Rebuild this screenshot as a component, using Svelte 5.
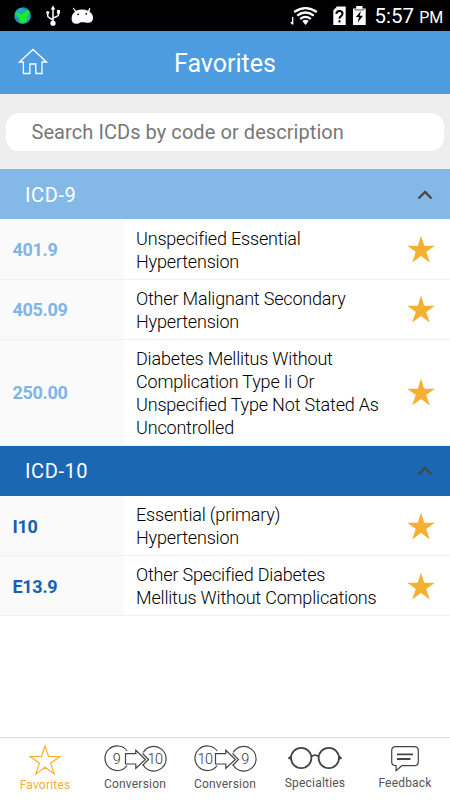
<script>
    let sections = [
        {
            name: "ICD-9",
            kind: "nine",
            rows: [
                { code: "401.9", lines: ["Unspecified Essential", "Hypertension"] },
                { code: "405.09", lines: ["Other Malignant Secondary", "Hypertension"] },
                { code: "250.00", lines: ["Diabetes Mellitus Without", "Complication Type Ii Or", "Unspecified Type Not Stated As", "Uncontrolled"] }
            ]
        },
        {
            name: "ICD-10",
            kind: "ten",
            rows: [
                { code: "I10", lines: ["Essential (primary)", "Hypertension"] },
                { code: "E13.9", lines: ["Other Specified Diabetes", "Mellitus Without Complications"] }
            ]
        }
    ];

    let tabs = [
        { label: "Favorites", icon: "star" },
        { label: "Conversion", icon: "convert", from: "9", to: "10" },
        { label: "Conversion", icon: "convert", from: "10", to: "9" },
        { label: "Specialties", icon: "glasses" },
        { label: "Feedback", icon: "bubble" }
    ];
    let active = "Favorites";
    let search = "";
    let closed = {};
</script>

<div class="screen">
    <div class="status">
        <svg class="notes" width="100" height="31" viewBox="0 0 100 31">
            <circle cx="22.6" cy="15.7" r="8.3" fill="#20a9b8" />
            <path d="M17 12l4 3 7-5 2 2-3 5-1 4-4 2-3-2 1-3-4-4z" fill="#1cf01c" />
            <path d="M15.5 18l4 4M23 8l4 1" stroke="#1687b5" stroke-width="1.5" />
            <g fill="none" stroke="#fff" stroke-width="1.5">
                <path d="M53 24V8M47.7 12.5v3.2q0 1.8 5.3 4M58.5 11.5v3q0 1.8-5.5 3.5" />
            </g>
            <g fill="#fff">
                <path d="M50.7 9.5L53 5.6l2.3 3.9z" />
                <circle cx="53" cy="23.2" r="2.6" />
                <circle cx="47.7" cy="12.5" r="1.6" />
                <path d="M57 10h3v3.5h-3z" />
                <path d="M73.500 7.700l2.500 3q6-2.600 12 0l1.500-3 .8.4-.7 4q3.400 2 3.400 5.800 0 4.800-4.800 4.800-2.200 0-4.200-.5-2.500.3-3.500 0-1.500 1.500-4 1.500-4.900 0-4.900-5 0-4.600 3.400-6.900l-2.400-3.800z" />
            </g>
            <circle cx="78.2" cy="14.3" r=".9" />
            <circle cx="86.3" cy="13.8" r=".9" />
        </svg>
        <svg class="signals" width="80" height="31" viewBox="290 0 80 31">
            <g fill="none" stroke="#fff" stroke-width="2.3">
                <path d="M294.200 12Q305.500 4.300 316.800 12M297.200 15.600Q305.500 9.500 313.800 15.600M300.200 19Q305.500 14.700 310.800 19" />
            </g>
            <path d="M302.300 21q3.200-2.400 6.400 0l-3.200 4z" fill="#fff" />
            <path d="M292.700 17v7.500M290.800 22l1.700 2.200" fill="none" stroke="#fff" stroke-width="1.300" />
            <path d="M333.300 10.500l3.600-4h8.800v18.500h-12.400z" fill="#fff" />
            <path d="M336.300 13.800q.3-2.700 3.200-2.700 3 0 3 2.500 0 1.500-1.500 2.600-1.500 1-1.500 2.500M339.500 20.200v2.400" fill="none" stroke="#000" stroke-width="2" />
            <path d="M353 8.500h3.200V6h6.300v2.500h3.200V25H353z" fill="#fff" />
            <path d="M354.500 9.900h9.800" stroke="#000" stroke-width=".7" />
            <path d="M361 11l-5.200 6h3.200l-1.400 5.800 5.400-7h-3.300z" />
        </svg>
        <span class="clock">5:57 <small>PM</small></span>
    </div>

    <header>
        <svg class="home" width="30" height="28" viewBox="0 0 30 28">
            <path d="M1.500 14L15 1.500 28.500 14H24v11.500h-6.200V16h-5.900v9.500H5.400V14z" fill="none" stroke="#fff" stroke-width="1.300" />
        </svg>
        <h1>Favorites</h1>
    </header>

    <div class="search">
        <input bind:value={search} placeholder="Search ICDs by code or description" />
    </div>

    <main>
        {#each sections as section}
        <section class={section.kind}>
            <button class="title" on:click={() => closed[section.name] = !closed[section.name]}>
                <span>{section.name}</span>
                <svg width="16" height="12" viewBox="0 0 16 12">
                    <path d="M1.500 9.500L8 3l6.500 6.500" fill="none" stroke="#4a4644" stroke-width="2.300" />
                </svg>
            </button>
            {#if !closed[section.name]}
            {#each section.rows as row}
            <div class="row">
                <div class="code">{row.code}</div>
                <div class="text">
                    {#each row.lines as line}<div>{line}</div>{/each}
                </div>
                <svg class="fav" width="28" height="28" viewBox="0 0 28 28">
                    <path d="M14 .5l3.200 10.200h10.600l-8.600 6.400L22.900 27.500 14 21.100 5.100 27.500l3.700-10.400L.2 10.700h10.600z" fill="#f5b031" />
                </svg>
            </div>
            {/each}
            {/if}
        </section>
        {/each}
    </main>

    <nav>
        {#each tabs as tab}
        <button class="tab {tab.icon}" class:active={active === tab.label} on:click={() => active = tab.label}>
            {#if tab.icon === "star"}
            <svg width="34" height="32" viewBox="0 0 34 32">
                <path d="M17 3l3.500 10.500h11.300l-9.200 6.700 3.600 10.700-9.200-6.600-9.200 6.600 3.600-10.700-9.200-6.700h11.300z" />
            </svg>
            {:else if tab.icon === "convert"}
            <svg width="66" height="32" viewBox="0 0 66 32">
                <path d="M25.200 8A12.300 12.300 0 1 0 25.200 22.500" />
                <path d="M41.200 9.500A12.300 12.300 0 1 1 41.200 22" />
                <path d="M23.500 10.700h10.300V7.200l9.600 9.300-9.600 8.800v-4.300H23.500z" />
                <path d="M40.500 10.500l6 6-6 6" />
                <text x={tab.from === "9" ? 14.5 : 13} y="20.500">{tab.from}</text>
                <text x="53" y="20.500">{tab.to}</text>
            </svg>
            {:else if tab.icon === "glasses"}
            <svg width="54" height="30" viewBox="0 0 54 30">
                <circle cx="13.200" cy="15" r="10.200" />
                <circle cx="40.800" cy="15" r="10.200" />
                <path d="M23.400 13.500q3.600-2.700 7.200 0M3 13.500l-2 1.500 2 1M51 13.500l2 1.500-2 1" />
            </svg>
            {:else}
            <svg width="30" height="30" viewBox="0 0 30 30">
                <path d="M5.800 3.700h18.500q4 0 4 4v11q0 4-4 4H11.800l-5.700 5v-5q-4.400 0-4.400-4v-11q0-4 4.100-4z" />
                <path d="M7 11.300h16M7 16h13.500" stroke-width="1.800" />
            </svg>
            {/if}
            <span>{tab.label}</span>
        </button>
        {/each}
    </nav>
</div>

<style>
    :global(body) {
        margin: 0;
        background: #fff;
    }
    .screen {
        width: 450px;
        height: 800px;
        display: flex;
        flex-direction: column;
        overflow: hidden;
        font-family: Roboto, sans-serif;
    }
    button {
        border: 0;
        padding: 0;
        font-family: inherit;
        background: none;
    }

    .status {
        height: 31px;
        flex: none;
        display: flex;
        background: #000;
        color: #fff;
    }
    .signals {
        margin-left: 190px;
    }
    .clock {
        margin-left: 4.500px;
        font-size: 20.500px;
        line-height: 33px;
        white-space: nowrap;
    }
    .clock small {
        font-size: 16px;
    }

    header {
        height: 63px;
        flex: none;
        display: grid;
        grid-template-columns: 66px 1fr 66px;
        align-items: center;
        background: #4c9cdf;
        color: #fff;
    }
    .home {
        margin: 0 0 1px 18px;
    }
    h1 {
        margin: 2px 0 0;
        text-align: center;
        font-size: 25px;
        font-weight: 400;
    }

    .search {
        height: 75px;
        flex: none;
        box-sizing: border-box;
        padding: 18.500px 6px 0;
        background: #eee;
    }
    .search input {
        width: 100%;
        height: 38px;
        box-sizing: border-box;
        border: 0;
        border-radius: 13px;
        padding: 1px 25px 0 25.500px;
        background: #fff;
        font-family: inherit;
        font-size: 20px;
        letter-spacing: .07px;
        color: #777;
    }
    .search input::placeholder {
        color: #777;
    }

    main {
        flex: 1;
    }
    .title {
        width: 100%;
        height: 50px;
        margin-bottom: .5px;
        padding: 1px 17px 0 25px;
        display: flex;
        align-items: center;
        justify-content: space-between;
        font-size: 20px;
        letter-spacing: .6px;
        color: #fff;
    }
    .nine .title {
        background: #84b8e6;
    }
    .ten .title {
        background: #1b67b3;
    }
    .row {
        display: grid;
        grid-template-columns: 124px 1fr 43px;
        box-sizing: border-box;
        border-bottom: 1px solid #f1f1f1;
    }
    .code {
        display: flex;
        align-items: center;
        padding: 1px 0 0 12.500px;
        background: #fafafa;
        font-size: 18px;
        font-weight: 700;
        letter-spacing: -.3px;
    }
    .nine .code {
        color: #7eb5e6;
    }
    .ten .code {
        color: #1560b0;
    }
    .text {
        padding: 7px 0 6px 12px;
        font-size: 18px;
        font-weight: 300;
        letter-spacing: -.18px;
        line-height: 23px;
        white-space: nowrap;
        color: #000;
    }
    .fav {
        align-self: center;
    }

    nav {
        height: 63px;
        flex: none;
        box-sizing: border-box;
        border-top: 1px solid #ddd;
        display: grid;
        grid-template-columns: repeat(5, 1fr);
        background: #fff;
    }
    .tab {
        display: flex;
        flex-direction: column;
        align-items: center;
        padding-top: 5px;
        font-size: 12px;
        letter-spacing: .2px;
        color: #555;
    }
    .tab span {
        line-height: 16px;
        margin-top: 1px;
    }
    .star span, .glasses span, .bubble span {
        margin-top: 2px;
    }
    .tab svg {
        fill: none;
        stroke: #444;
        stroke-width: 1.2;
    }
    .tab text {
        fill: #333;
        stroke: none;
        font-size: 14.500px;
        font-weight: 300;
        letter-spacing: -.5px;
        text-anchor: middle;
    }
    .glasses svg {
        stroke-width: 1.8;
    }
    .tab.active {
        color: #f5b031;
    }
    .tab.active svg {
        stroke: #f5b031;
    }
</style>
